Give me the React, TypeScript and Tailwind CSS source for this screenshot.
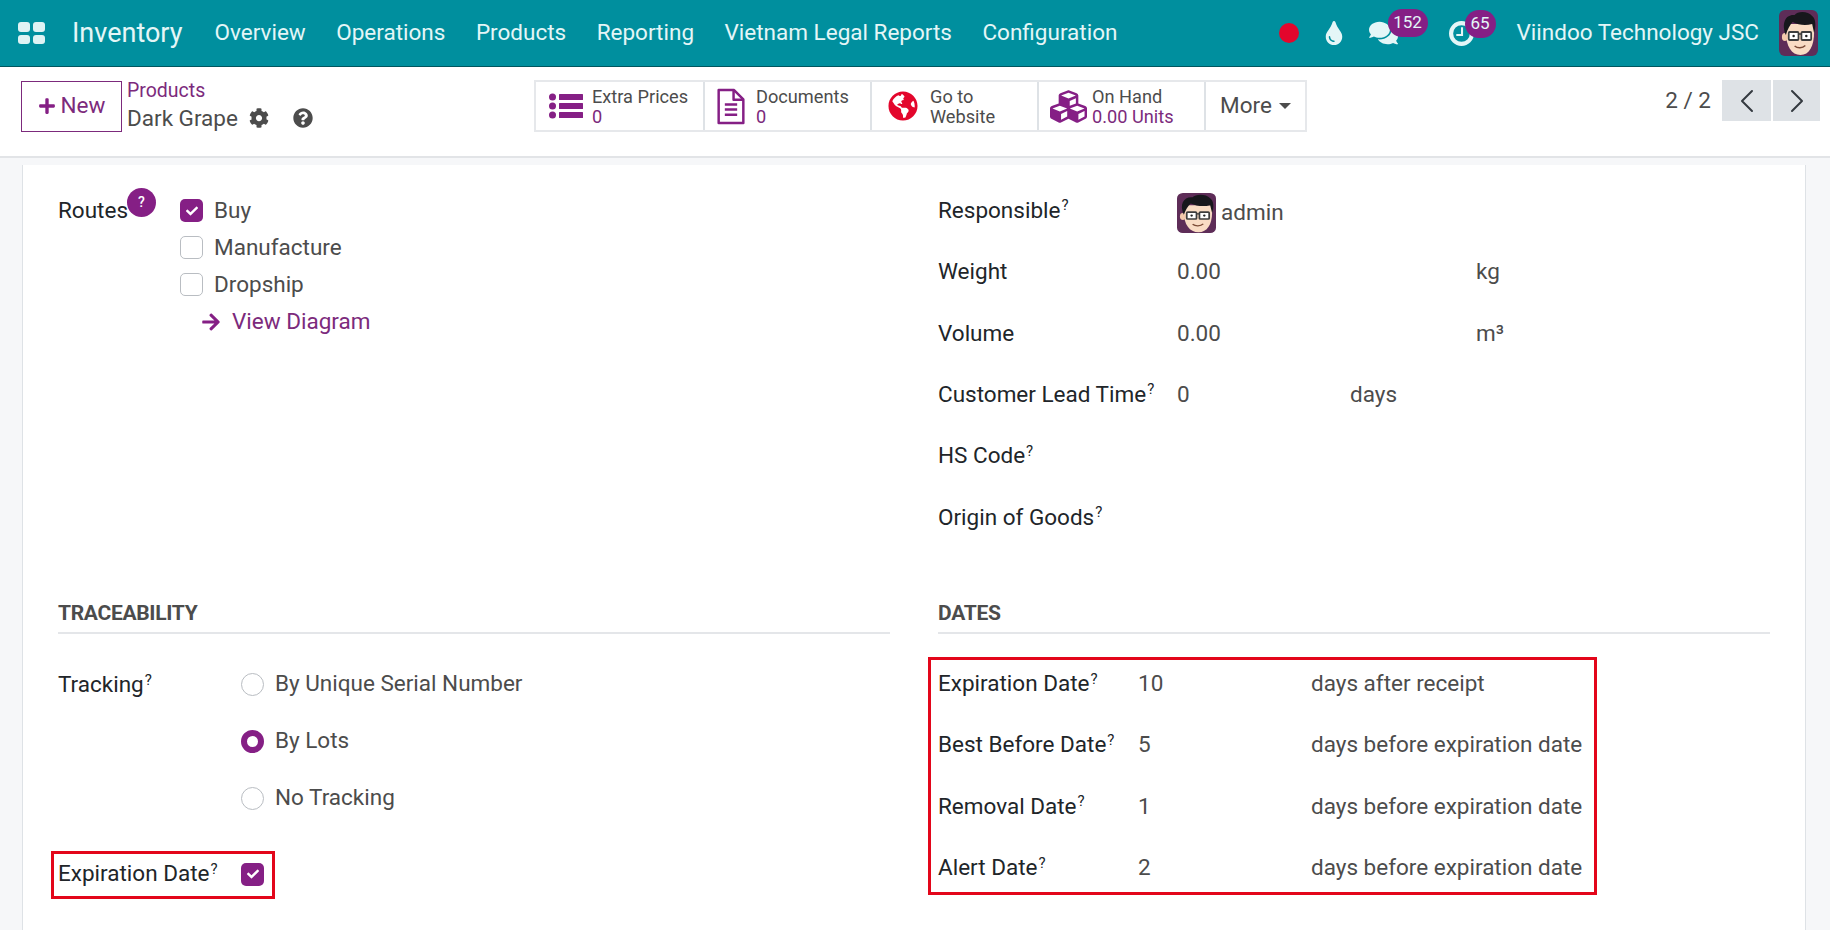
import { ReactNode } from 'react';
import { ChevronLeft, ChevronRight } from 'lucide-react';
import {
  FaArrowRight,
  FaCheck,
  FaCog,
  FaComments,
  FaCubes,
  FaGlobeAmericas,
  FaPlus,
  FaQuestionCircle,
  FaTint,
} from 'react-icons/fa';

const NAV = ['Overview', 'Operations', 'Products', 'Reporting', 'Vietnam Legal Reports', 'Configuration'];

function Avatar({ className }: { className: string }) {
  return (
    <svg viewBox="0 0 40 46" preserveAspectRatio="none" className={className}>
      <rect width="40" height="46" rx="6" fill="#5e2d58" />
      <path d="M7 22c0 14 6 23 15 23s14-9 14-23V14H7z" fill="#f9dcc4" />
      <ellipse cx="6" cy="27" rx="3" ry="4" fill="#f3c9ac" />
      <path d="M7 25C2 13 7 4 16 5c3-4 14-4 18 1 4 3 4 11 2 17l-2-9c-7 2-14 1-20-2-3 3-5 7-7 13z" fill="#17171c" />
      <rect x="10" y="22" width="10" height="8" rx="1" fill="#fff" stroke="#3d3d3d" strokeWidth="1.8" />
      <rect x="23" y="22" width="10" height="8" rx="1" fill="#fff" stroke="#3d3d3d" strokeWidth="1.8" />
      <path d="M20 24h3" stroke="#3d3d3d" strokeWidth="1.5" />
      <circle cx="15" cy="26" r="1.3" fill="#222" />
      <circle cx="28" cy="26" r="1.3" fill="#222" />
      <path d="M16 36c3 2.5 8 2.5 11-.5" stroke="#7a4a35" strokeWidth="1.5" fill="none" />
    </svg>
  );
}

function ClockIcon() {
  return (
    <svg viewBox="0 0 24 24" className="h-[25px] w-[25px]" fill="none" stroke="currentColor">
      <circle cx="12" cy="12" r="10" strokeWidth="4" />
      <path d="M12.5 6v7.5H7" strokeWidth="2" />
    </svg>
  );
}

function ListIcon() {
  return (
    <svg viewBox="0 0 34 26" className="h-[26px] w-[34px]" fill="#851f85">
      <circle cx="3.5" cy="4" r="3.5" />
      <circle cx="3.5" cy="13" r="3.5" />
      <circle cx="3.5" cy="22" r="3.5" />
      <rect x="10" y="1" width="24" height="6" rx="0.5" />
      <rect x="10" y="10" width="24" height="6" rx="0.5" />
      <rect x="10" y="19" width="24" height="6" rx="0.5" />
    </svg>
  );
}

function DocIcon() {
  return (
    <svg viewBox="0 0 28 36" className="h-[37px] w-[30px]" fill="none" stroke="#851f85" strokeWidth="2.4">
      <path d="M2 2h15l9 9v23H2z" strokeLinejoin="round" />
      <path d="M16.5 2v9.5H26" strokeLinejoin="round" />
      <path d="M8 16h12M8 21h12M8 26h12" />
    </svg>
  );
}

function Hint() {
  return <sup className="ml-[1px] text-[15px]">?</sup>;
}

function Checkbox({ checked = false }: { checked?: boolean }) {
  return checked ? (
    <span className="flex h-[23px] w-[23px] shrink-0 items-center justify-center rounded-[5px] bg-[#851f85] text-white">
      <FaCheck className="h-[12px] w-[12px]" />
    </span>
  ) : (
    <span className="h-[23px] w-[23px] shrink-0 rounded-[5px] border border-[#b9bdc2] bg-white" />
  );
}

function Radio({ checked = false }: { checked?: boolean }) {
  return checked ? (
    <span className="h-[23px] w-[23px] shrink-0 rounded-full border-[6px] border-[#851f85] bg-white" />
  ) : (
    <span className="h-[23px] w-[23px] shrink-0 rounded-full border border-[#b9bdc2] bg-white" />
  );
}

function StatButton({
  className,
  icon,
  children,
}: {
  className: string;
  icon: ReactNode;
  children: ReactNode;
}) {
  return (
    <div className={`flex h-full items-center border-r-2 border-[#dee2e6] ${className}`}>
      {icon}
      <div className="pt-[1px] text-[18.2px] leading-[20px] text-[#4c4c4c]">{children}</div>
    </div>
  );
}

function SectionTitle({ children }: { children: string }) {
  return (
    <div className="flex h-[36px] items-center border-b-2 border-[#e4e6e9] pb-[2px] text-[21px] font-bold tracking-[-0.3px] text-[#4c4c4c]">
      {children}
    </div>
  );
}

function TopBar() {
  return (
    <header className="flex h-[67px] items-center border-b border-[#00565f] bg-[#008f9e] pl-[18px] pr-[12px] text-[#e4f6f7]">
      <div className="grid h-[22px] w-[27px] grid-cols-2 gap-[3px]">
        <span className="rounded-[3px] bg-[#dff3f4]" />
        <span className="rounded-[3px] bg-[#dff3f4]" />
        <span className="rounded-[3px] bg-[#dff3f4]" />
        <span className="rounded-[3px] bg-[#dff3f4]" />
      </div>
      <span className="ml-[27px] text-[27px]">Inventory</span>
      <nav className="ml-[32px] flex gap-[30.5px] text-[22.5px]">
        {NAV.map((item) => (
          <span key={item}>{item}</span>
        ))}
      </nav>
      <div className="ml-auto flex items-center">
        <span className="h-[20px] w-[20px] rounded-full bg-[#e3062c]" />
        <FaTint className="ml-[25px] h-[24px] w-[20px]" />
        <div className="relative ml-[25px] w-[80px]">
          <FaComments className="h-[26px] w-[29px]" />
          <span className="absolute left-[19px] top-[-11px] flex h-[28px] w-[40px] items-center justify-center rounded-full bg-[#851f85] text-[17px]">
            152
          </span>
        </div>
        <div className="relative w-[68px]">
          <ClockIcon />
          <span className="absolute left-[16px] top-[-11px] flex h-[28px] w-[31px] items-center justify-center rounded-full bg-[#851f85] text-[17px]">
            65
          </span>
        </div>
        <span className="text-[22.5px]">Viindoo Technology JSC</span>
        <Avatar className="ml-[20px] h-[46px] w-[39px]" />
      </div>
    </header>
  );
}

function ControlPanel() {
  return (
    <div className="flex h-[91px] items-start border-b-2 border-[#e2e4e7] bg-white pl-[21px] pr-[10px] pt-[13px]">
      <button className="mt-[1px] flex h-[51px] w-[101px] items-center justify-center gap-[5px] border border-[#7c2a7c] pb-[2px] text-[22.5px] text-[#7c2a7c]">
        <FaPlus className="h-[18px] w-[18px] text-[#851f85]" />
        New
      </button>
      <div className="ml-[5px] w-[407px]">
        <div className="text-[19.5px] leading-[22px] text-[#7c2a7c]">Products</div>
        <div className="mt-[2px] flex items-center text-[22.5px] leading-[28px] text-[#4c4c4c]">
          Dark Grape
          <FaCog className="ml-[11px] h-[20px] w-[20px]" />
          <FaQuestionCircle className="ml-[24px] h-[20px] w-[20px]" />
        </div>
      </div>
      <div className="flex h-[52px] w-[773px] border-2 border-[#e6e8eb]">
        <StatButton className="w-[169px] gap-[9px] pl-[13px]" icon={<ListIcon />}>
          <div>Extra Prices</div>
          <div className="text-[#7c2a7c]">0</div>
        </StatButton>
        <StatButton className="w-[167px] gap-[10px] pl-[11px]" icon={<DocIcon />}>
          <div>Documents</div>
          <div className="text-[#7c2a7c]">0</div>
        </StatButton>
        <StatButton
          className="w-[167px] gap-[12px] pl-[16px]"
          icon={<FaGlobeAmericas className="h-[30px] w-[30px] text-[#e3062c]" />}
        >
          <div>Go to</div>
          <div>Website</div>
        </StatButton>
        <StatButton
          className="w-[167px] gap-[3px] pl-[9px]"
          icon={<FaCubes className="h-[37px] w-[41px] text-[#851f85]" />}
        >
          <div>On Hand</div>
          <div className="text-[#7c2a7c]">0.00 Units</div>
        </StatButton>
        <div className="flex flex-1 items-center justify-center gap-[7px] text-[22.5px] text-[#4c4c4c]">
          More
          <span className="h-0 w-0 border-x-[6px] border-t-[6px] border-x-transparent border-t-[#4c4c4c]" />
        </div>
      </div>
      <div className="ml-auto flex items-start">
        <span className="mt-[4px] text-[22.5px] text-[#4c4c4c]">2 / 2</span>
        <div className="ml-[11px] flex gap-[2px]">
          <div className="flex h-[41px] w-[49px] items-center justify-center bg-[#dee2e6] text-[#343a40]">
            <ChevronLeft className="h-[40px] w-[40px]" strokeWidth={1.2} />
          </div>
          <div className="flex h-[41px] w-[47px] items-center justify-center bg-[#dee2e6] text-[#343a40]">
            <ChevronRight className="h-[40px] w-[40px]" strokeWidth={1.2} />
          </div>
        </div>
      </div>
    </div>
  );
}

function InfoRow({ label, hint, children }: { label: string; hint?: boolean; children?: ReactNode }) {
  return (
    <div className="flex h-[61.4px] items-center">
      <div className="w-[239px] shrink-0 text-[#212529]">
        {label}
        {hint && <Hint />}
      </div>
      {children}
    </div>
  );
}

function DateRow({ label, value, suffix }: { label: string; value: string; suffix: string }) {
  return (
    <div className="flex h-[46px] items-center">
      <div className="w-[200px] shrink-0 text-[#212529]">
        {label}
        <Hint />
      </div>
      <div className="w-[173px] shrink-0">{value}</div>
      <div className="whitespace-nowrap">{suffix}</div>
    </div>
  );
}

function TrackRow({ label, checked }: { label: string; checked?: boolean }) {
  return (
    <div className="flex h-[46px] items-center gap-[11px]">
      <Radio checked={checked} />
      {label}
    </div>
  );
}

export default function App() {
  return (
    <div className="h-[930px] w-[1830px] overflow-hidden bg-[#f6f7f9] font-['Roboto',sans-serif] text-[22.5px] text-[#4c4c4c]">
      <TopBar />
      <ControlPanel />
      <main className="ml-[22px] mt-[7px] h-[765px] w-[1784px] border-x border-[#dee2e6] bg-white px-[35px]">
        <div className="grid h-[433px] grid-cols-[832px_832px] gap-x-[48px] pt-[15px]">
          <div className="pt-[12px]">
            <div className="relative flex">
              <div className="w-[122px] leading-[37px] text-[#212529]">Routes</div>
              <span className="absolute left-[69px] top-[-4px] flex h-[29px] w-[29px] items-center justify-center rounded-full bg-[#851f85] text-[14px] font-medium text-white">
                ?
              </span>
              <div>
                {['Buy', 'Manufacture', 'Dropship'].map((route, i) => (
                  <div key={route} className="flex h-[37px] items-center gap-[11px]">
                    <Checkbox checked={i === 0} />
                    {route}
                  </div>
                ))}
                <div className="flex h-[37px] items-center gap-[11px] pl-[21px] text-[#7c2a7c]">
                  <FaArrowRight className="h-[20px] w-[20px] text-[#851f85]" />
                  View Diagram
                </div>
              </div>
            </div>
          </div>
          <div>
            <InfoRow label="Responsible" hint>
              <Avatar className="h-[40px] w-[39px] translate-y-[2px]" />
              <span className="ml-[5px] translate-y-[2px]">admin</span>
            </InfoRow>
            <InfoRow label="Weight">
              <span className="w-[299px]">0.00</span>
              <span>kg</span>
            </InfoRow>
            <InfoRow label="Volume">
              <span className="w-[299px]">0.00</span>
              <span>m³</span>
            </InfoRow>
            <InfoRow label="Customer Lead Time" hint>
              <span className="w-[173px]">0</span>
              <span>days</span>
            </InfoRow>
            <InfoRow label="HS Code" hint />
            <InfoRow label="Origin of Goods" hint />
          </div>
        </div>
        <div className="grid grid-cols-[832px_832px] gap-x-[48px]">
          <div>
            <SectionTitle>TRACEABILITY</SectionTitle>
            <div className="mt-[27px] flex">
              <div className="w-[183px] pt-[7px] text-[#212529]">
                Tracking
                <Hint />
              </div>
              <div className="flex flex-col gap-[11px]">
                <TrackRow label="By Unique Serial Number" />
                <TrackRow label="By Lots" checked />
                <TrackRow label="No Tracking" />
              </div>
            </div>
            <div className="-ml-[7px] mt-[30px] flex h-[48px] w-[224px] items-center border-[3px] border-[#e3061a] pb-[2px] pl-[4px]">
              <div className="w-[183px] shrink-0 text-[#212529]">
                Expiration Date
                <Hint />
              </div>
              <Checkbox checked />
            </div>
          </div>
          <div>
            <SectionTitle>DATES</SectionTitle>
            <div className="-ml-[10px] mt-[23px] flex w-[669px] flex-col gap-[15.3px] border-[3px] border-[#e3061a] py-[1px] pl-[7px]">
              <DateRow label="Expiration Date" value="10" suffix="days after receipt" />
              <DateRow label="Best Before Date" value="5" suffix="days before expiration date" />
              <DateRow label="Removal Date" value="1" suffix="days before expiration date" />
              <DateRow label="Alert Date" value="2" suffix="days before expiration date" />
            </div>
          </div>
        </div>
      </main>
    </div>
  );
}
